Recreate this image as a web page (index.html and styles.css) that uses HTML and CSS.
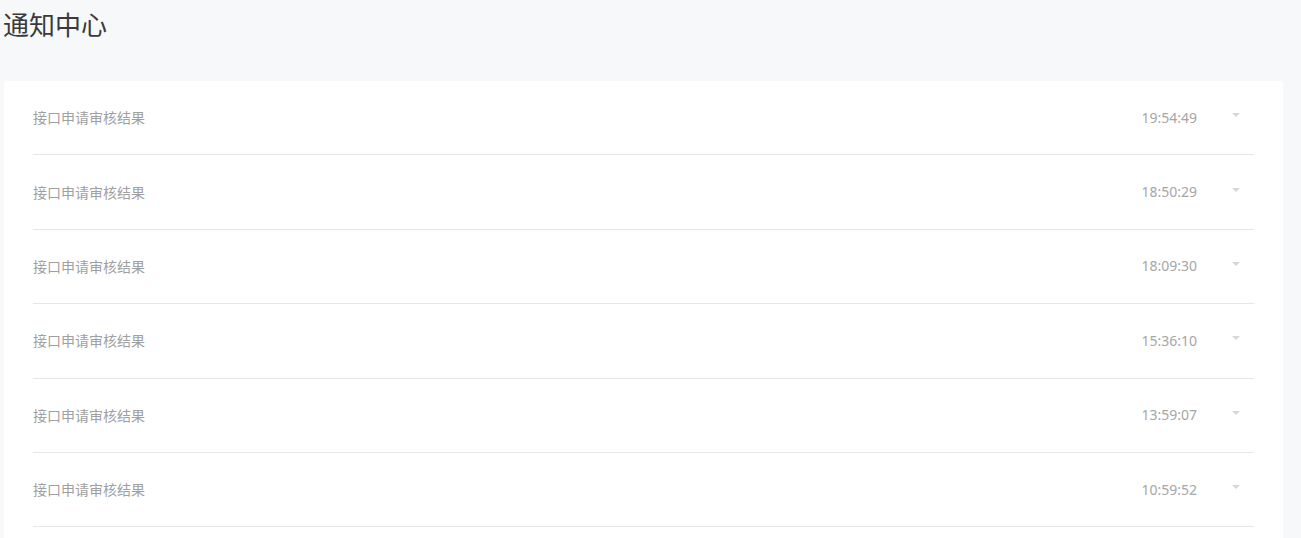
FILE: index.html
```html
<!DOCTYPE html>
<html lang="zh">
<head>
<meta charset="utf-8">
<title>通知中心</title>
<link rel="stylesheet" href="styles.css">
</head>
<body>
<div class="page">
  <h1 class="title">通知中心</h1>
  <div class="card">
    <ul class="list">
      <li class="row"><span class="name">接口申请审核结果</span><span class="time">19:54:49</span><span class="arrow"><i class="caret"></i></span></li>
      <li class="row"><span class="name">接口申请审核结果</span><span class="time">18:50:29</span><span class="arrow"><i class="caret"></i></span></li>
      <li class="row"><span class="name">接口申请审核结果</span><span class="time">18:09:30</span><span class="arrow"><i class="caret"></i></span></li>
      <li class="row"><span class="name">接口申请审核结果</span><span class="time">15:36:10</span><span class="arrow"><i class="caret"></i></span></li>
      <li class="row"><span class="name">接口申请审核结果</span><span class="time">13:59:07</span><span class="arrow"><i class="caret"></i></span></li>
      <li class="row"><span class="name">接口申请审核结果</span><span class="time">10:59:52</span><span class="arrow"><i class="caret"></i></span></li>
    </ul>
  </div>
</div>
</body>
</html>
```
FILE: styles.css
```css
html, body {
  margin: 0;
  padding: 0;
  background: #f7f8fa;
  font-family: "Noto Sans", "Noto Sans CJK SC", sans-serif;
  overflow: hidden;
}
.page {
  padding: 0 18px 0 4px;
}
.title {
  margin: 0 0 0 -1px;
  height: 81px;
  box-sizing: border-box;
  padding-top: 6px;
  font-size: 26px;
  font-weight: 400;
  line-height: 38px;
  color: #3a3a3a;
}
.card {
  background: #fff;
  border-radius: 4px;
  padding: 0 29px 20px;
}
.list {
  list-style: none;
  margin: 0;
  padding: 0;
}
.row {
  display: flex;
  align-items: center;
  height: 74.4px;
  box-sizing: border-box;
  border-bottom: 1px solid #e6e7eb;
  font-size: 14px;
  padding-bottom: 1px;
}
.name {
  flex: 1;
  color: #a0a0a0;
  font-family: "Noto Sans CJK SC", sans-serif;
  font-size: 14px;
}
.time {
  color: #a6a6a6;
  font-size: 14px;
}
.arrow {
  width: 36px;
  margin-left: 21px;
  display: flex;
  justify-content: center;
  align-items: center;
  height: 20px;
  padding-bottom: 4px;
  box-sizing: border-box;
}
.caret {
  width: 0;
  height: 0;
  border-left: 4px solid transparent;
  border-right: 4px solid transparent;
  border-top: 4px solid #d6d7dc;
}
```
